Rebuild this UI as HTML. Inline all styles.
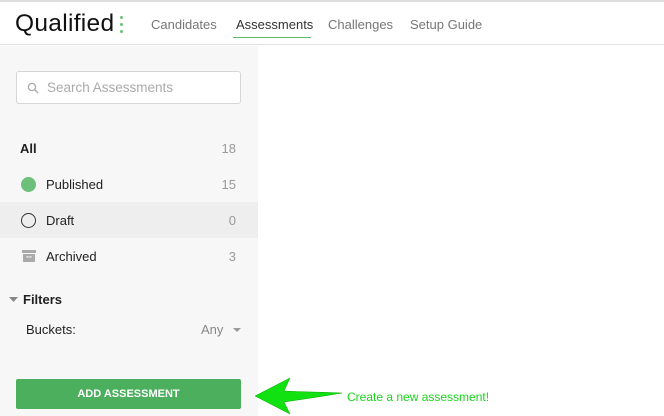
<!DOCTYPE html>
<html><head><style>
*{margin:0;padding:0;box-sizing:border-box}
body{width:664px;height:416px;overflow:hidden;background:#fff;font-family:"Liberation Sans",sans-serif;position:relative}
.top{position:absolute;left:0;top:0;width:664px;height:2px;background:#ddd}
.hdr{position:absolute;left:0;top:2px;width:664px;height:43px;border-bottom:1px solid #e2e2e2;background:#fff}
.logo{position:absolute;left:15px;top:8px;font-size:24.5px;color:#111;letter-spacing:0.3px}
.dots{position:absolute;left:120px;top:14px}
.dots i{display:block;width:3px;height:3px;border-radius:50%;background:#6fc27b;margin-bottom:4px}
.nav{position:absolute;top:15px;font-size:13px;color:#777}
.side{position:absolute;left:0;top:46px;width:258px;height:370px;background:#f7f7f7}
.search{position:absolute;left:16px;top:71px;width:225px;height:33px;border:1px solid #d6d6d6;border-radius:3px;background:#fff;font-size:13.5px;color:#aaa;padding:8px 0 0 30px}
.row{position:absolute;left:0;width:258px;height:36px;font-size:13px;color:#222}
.row .l{position:absolute;left:46px;top:11px}
.row .n{position:absolute;right:22px;top:11px;color:#999}
</style></head><body>
<div class="top"></div>
<div class="hdr">
<div class="logo">Qualified</div>
<div class="dots"><i></i><i></i><i></i></div>
<div class="nav" style="left:151px">Candidates</div>
<div class="nav" style="left:236px;color:#333">Assessments</div>
<div style="position:absolute;left:233px;top:35px;width:78px;height:1px;background:#5cb86a"></div>
<div class="nav" style="left:328px">Challenges</div>
<div class="nav" style="left:410px">Setup Guide</div>
</div>
<div class="side"></div>
<div class="search">Search Assessments
<svg style="position:absolute;left:10px;top:10px" width="12" height="12" viewBox="0 0 12 12"><circle cx="5" cy="5" r="3.6" fill="none" stroke="#aaa" stroke-width="1.3"/><path d="M7.6 7.6L11 11" stroke="#aaa" stroke-width="1.4"/></svg></div>
<div class="row" style="top:130px"><span class="l" style="left:20px;font-weight:bold">All</span><span class="n">18</span></div>
<div class="row" style="top:166px"><span style="position:absolute;left:21px;top:11px;width:15px;height:15px;border-radius:50%;background:#6cc07a"></span><span class="l">Published</span><span class="n">15</span></div>
<div class="row" style="top:202px;background:#eee"><span style="position:absolute;left:21px;top:11px;width:15px;height:15px;border-radius:50%;border:1.5px solid #333"></span><span class="l">Draft</span><span class="n">0</span></div>
<div class="row" style="top:238px"><svg style="position:absolute;left:22px;top:11px" width="14" height="14" viewBox="0 0 14 14"><rect x="0" y="1" width="14" height="3" fill="#aaa"/><rect x="1" y="5" width="12" height="8" fill="#aaa"/><path d="M5 7v1h4v-1" stroke="#eee" fill="none"/></svg><span class="l">Archived</span><span class="n">3</span></div>
<svg style="position:absolute;left:9px;top:297px" width="9" height="6"><path d="M0 0h9L4.5 5z" fill="#888"/></svg>
<div style="position:absolute;left:23px;top:292px;font-size:13px;font-weight:bold;color:#222">Filters</div>
<div style="position:absolute;left:26px;top:322px;font-size:13px;color:#222">Buckets:</div>
<div style="position:absolute;left:201px;top:322px;font-size:13px;color:#888">Any</div>
<svg style="position:absolute;left:233px;top:328px" width="8" height="5"><path d="M0 0h8L4 4z" fill="#999"/></svg>
<div style="position:absolute;left:16px;top:379px;width:225px;height:30px;background:#4caf5e;border-radius:2px;color:#fff;font-size:11px;font-weight:bold;text-align:center;line-height:30px">ADD ASSESSMENT</div>
<svg style="position:absolute;left:254px;top:377px" width="90" height="38" viewBox="0 0 90 38"><path d="M1 19L36 1L30 14C50 15 65 15 88 16C65 20 50 22 30 25L36 37Z" fill="#11e011" stroke="#0a0" stroke-width="0.5"/></svg>
<div style="position:absolute;left:347px;top:390px;font-size:12px;color:#1ad41a">Create a new assessment!</div>
</body></html>
